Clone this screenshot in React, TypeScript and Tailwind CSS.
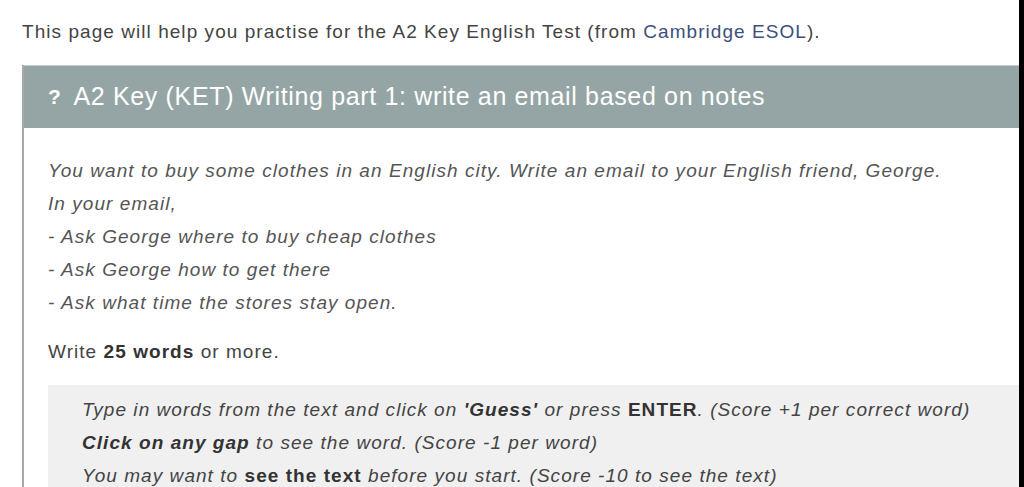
export default function App() {
  return (
    <div className="w-[1024px] h-[487px] overflow-hidden bg-white flex font-['Liberation_Sans',Arial,sans-serif]">
      <div className="flex-1 min-w-0 pl-[22px]">
        <p className="text-[19px] leading-[24px] tracking-[1.05px] text-[#444] pt-[20px] h-[65px] whitespace-nowrap">
          This page will help you practise for the A2 Key English Test (from{" "}
          <span className="text-[#3d4f7c]">Cambridge ESOL</span>).
        </p>
        <div className="border-l-2 border-[#a8a8a8]">
          <div className="h-[63px] bg-[#95a5a6] border-t border-[#c5cdce] flex items-center pl-[24px] text-white text-[25px] tracking-[0.65px] whitespace-nowrap">
            <span className="font-bold text-[21px] mr-[12px]">?</span>
            <span>A2 Key (KET) Writing part 1: write an email based on notes</span>
          </div>
          <div className="pl-[24px] pt-[26px] text-[19px] leading-[33px] tracking-[1.05px] text-[#555] whitespace-nowrap">
            <div className="italic">
              You want to buy some clothes in an English city. Write an email to your English friend, George.
              <br />
              In your email,
              <br />- Ask George where to buy cheap clothes
              <br />- Ask George how to get there
              <br />- Ask what time the stores stay open.
            </div>
            <p className="mt-[16px] text-[#444]">
              Write <b className="text-[#333]">25 words</b> or more.
            </p>
            <div className="mt-[17px] bg-[#f0f0f0] pl-[34px] pt-[8px] pb-[10px] italic text-[#444]">
              Type in words from the text and click on <b className="text-[#333]">'Guess'</b> or press{" "}
              <b className="not-italic text-[#333]">ENTER</b>. (Score +1 per correct word)
              <br />
              <b className="text-[#333]">Click on any gap</b> to see the word. (Score -1 per word)
              <br />
              You may want to <b className="not-italic text-[#333]">see the text</b> before you start. (Score -10 to see the text)
            </div>
          </div>
        </div>
      </div>
      <div className="w-[5px] bg-black" />
    </div>
  );
}
